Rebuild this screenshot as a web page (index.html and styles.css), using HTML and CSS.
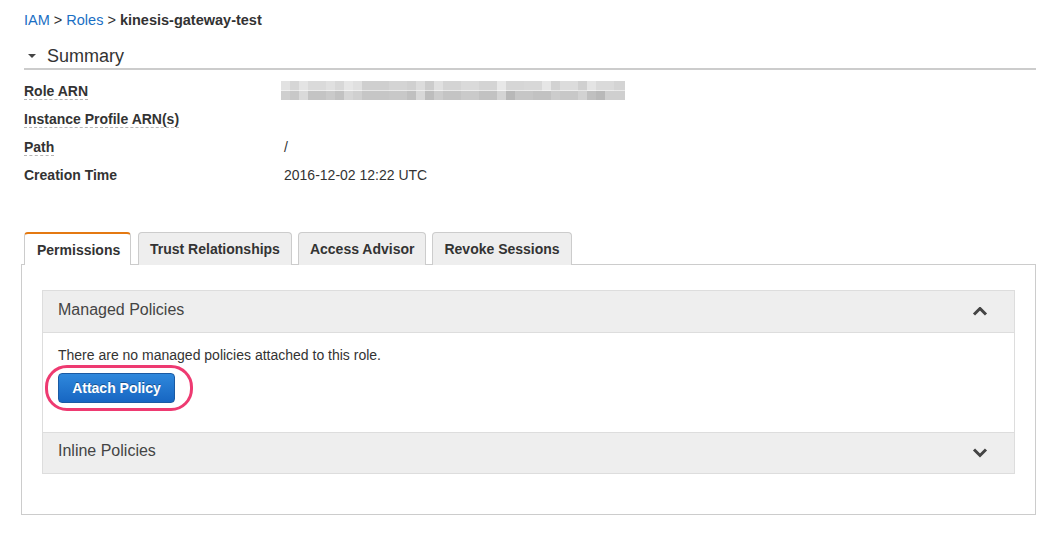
FILE: index.html
```html
<!DOCTYPE html>
<html>
<head>
<meta charset="utf-8">
<link rel="stylesheet" href="styles.css">
</head>
<body>
<div class="page">
  <div class="crumbs">
    <a class="link">IAM</a> <span class="sep">&gt;</span> <a class="link">Roles</a> <span class="sep">&gt;</span> <span class="current">kinesis-gateway-test</span>
  </div>

  <div class="summary-head">
    <span class="caret"></span>
    <span class="summary-title">Summary</span>
  </div>

  <div class="summary">
    <div class="row">
      <div class="label"><span class="dotted">Role ARN</span></div>
      <div class="value"><div class="blur"></div></div>
    </div>
    <div class="row">
      <div class="label"><span class="dotted">Instance Profile ARN(s)</span></div>
      <div class="value"></div>
    </div>
    <div class="row">
      <div class="label"><span class="dotted">Path</span></div>
      <div class="value">/</div>
    </div>
    <div class="row">
      <div class="label">Creation Time</div>
      <div class="value">2016-12-02 12:22 UTC</div>
    </div>
  </div>

  <div class="tabs">
    <div class="tab active">Permissions</div>
    <div class="tab">Trust Relationships</div>
    <div class="tab">Access Advisor</div>
    <div class="tab">Revoke Sessions</div>
  </div>

  <div class="panel">
    <div class="acc">
      <div class="acc-head">
        <span>Managed Policies</span>
        <svg class="chev" width="16" height="10" viewBox="0 0 16 10"><polyline points="2,7.5 8,1.5 14,7.5" fill="none" stroke="#444" stroke-width="3"/></svg>
      </div>
      <div class="acc-body">
        <p class="msg">There are no managed policies attached to this role.</p>
        <button class="btn">Attach Policy</button>
        <div class="annot"></div>
      </div>
      <div class="acc-head last">
        <span>Inline Policies</span>
        <svg class="chev" width="16" height="10" viewBox="0 0 16 10"><polyline points="2,1.5 8,7.5 14,1.5" fill="none" stroke="#444" stroke-width="3"/></svg>
      </div>
    </div>
  </div>
</div>
</body>
</html>
```

FILE: styles.css
```css
* { box-sizing: border-box; }
html, body { margin: 0; padding: 0; background: #fff; }
body {
  font-family: "Liberation Sans", Arial, sans-serif;
  font-size: 14px;
  color: #333;
}
.page {
  width: 1036px;
  padding-left: 21px;
}
.crumbs {
  padding: 10px 0 0 3px;
  line-height: 20px;
  height: 44px;
  font-size: 14.5px;
}
.link { color: #1a6fc4; text-decoration: none; }
.sep { color: #333; }
.current { font-weight: bold; color: #333; }

.summary-head {
  margin-left: 3px;
  display: flex;
  align-items: center;
  height: 26px;
  border-bottom: 2px solid #cccccc;
}
.caret {
  width: 0; height: 0;
  margin: 0 11px 0 4px;
  border-left: 4px solid transparent;
  border-right: 4px solid transparent;
  border-top: 4px solid #444;
}
.summary-title {
  font-size: 18px;
  color: #333;
  line-height: 24px;
}
.summary {
  margin-left: 3px;
  padding-top: 7px;
}
.row {
  display: flex;
  height: 28px;
  align-items: center;
}
.label {
  width: 260px;
  font-weight: bold;
  color: #333;
}
.dotted { border-bottom: 1px dashed #b5b5b5; }
.value { color: #333; }
.blur {
  width: 344px;
  height: 19px;
  margin-left: -3px;
  margin-top: -1px;
  background:
    linear-gradient(90deg,
      #e2e2e2 0 9px, #d6d6d6 9px 18px, #e4e4e4 18px 27px, #dadada 27px 45px, #e0e0e0 45px 54px,
      #d8d8d8 54px 63px, #e6e6e6 63px 72px, #e0e0e0 72px 81px, #cfcfcf 81px 108px, #d4d4d4 108px 126px,
      #d0d0d0 126px 135px, #dcdcdc 135px 144px, #cccccc 144px 153px, #e0e0e0 153px 162px, #d4d4d4 162px 180px,
      #dadada 180px 198px, #d4d4d4 198px 216px, #e8e8e8 216px 225px, #d6d6d6 225px 243px, #d8d8d8 243px 261px,
      #e6e6e6 261px 270px, #d2d2d2 270px 279px, #dcdcdc 279px 297px, #d0d0d0 297px 306px, #e4e4e4 306px 315px,
      #dadada 315px 333px, #d4d4d4 333px 344px) top / 100% 50% no-repeat,
    linear-gradient(90deg,
      #cfcfcf 0 9px, #c8c8c8 9px 18px, #dadada 18px 27px, #c4c4c4 27px 45px, #cacaca 45px 54px,
      #c2c2c2 54px 63px, #d6d6d6 63px 72px, #d0d0d0 72px 81px, #c6c6c6 81px 108px, #c8c8c8 108px 126px,
      #c0c0c0 126px 135px, #d8d8d8 135px 144px, #bdbdbd 144px 153px, #cccccc 153px 162px, #c4c4c4 162px 180px,
      #cacaca 180px 198px, #c2c2c2 198px 216px, #d4d4d4 216px 225px, #b8b8b8 225px 234px, #c6c6c6 234px 252px,
      #c2c2c2 252px 270px, #cccccc 270px 279px, #c8c8c8 279px 297px, #d2d2d2 297px 306px, #c0c0c0 306px 315px,
      #b9b9b9 315px 324px, #cfcfcf 324px 344px) bottom / 100% 50% no-repeat;
}

.tabs {
  display: flex;
  margin-top: 43px;
  padding-left: 3px;
  position: relative;
  z-index: 1;
  height: 32px;
}
.tab {
  height: 33px;
  padding: 0 11px;
  margin-right: 6px;
  background: #eeeeee;
  border: 1px solid #cccccc;
  border-bottom: none;
  border-radius: 4px 4px 0 0;
  font-weight: bold;
  color: #333;
  display: flex;
  align-items: center;
}
.tab.active {
  background: #fff;
  border-top: 2px solid #e47911;
  padding: 0 12px;
  margin-right: 7px;
  width: 107px;
}
.panel {
  border: 1px solid #cccccc;
  padding: 25px 20px 40px 20px;
}
.acc {
  border: 1px solid #dddddd;
}
.acc-head {
  height: 41px;
  background: #eeeeee;
  display: flex;
  align-items: center;
  justify-content: space-between;
  padding: 0 26px 0 15px;
  font-size: 16px;
  color: #444;
}
.acc-head.last { border-top: 1px solid #dddddd; }
.acc-head span { position: relative; top: -2px; }
.acc-body {
  position: relative;
  border-top: 1px solid #dddddd;
  background: #fff;
  height: 100px;
  padding: 14px 15px 0 15px;
}
.msg {
  margin: 0;
  line-height: 16px;
  color: #333;
}
.btn {
  margin-top: 10px;
  width: 117px;
  height: 30px;
  border: 1px solid #1a5aa3;
  border-radius: 4px;
  background: linear-gradient(#2f88dc, #1766c2);
  color: #fff;
  font-family: "Liberation Sans", Arial, sans-serif;
  font-size: 14px;
  font-weight: bold;
  text-shadow: 0 -1px 0 rgba(0,0,0,0.35);
  padding: 0;
  display: block;
}
.annot {
  position: absolute;
  left: 2px;
  top: 32px;
  width: 148px;
  height: 46px;
  border: 3px solid #ee3a71;
  border-radius: 22px;
}
```
